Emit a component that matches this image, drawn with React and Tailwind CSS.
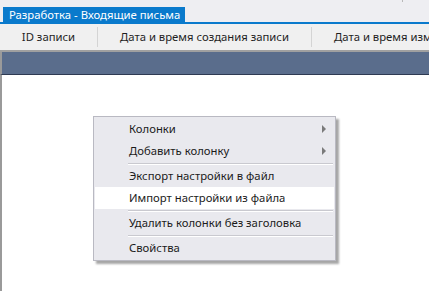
import { useState } from 'react';

const items = [
  { label: 'Колонки', sub: true },
  { label: 'Добавить колонку', sub: true, sep: true },
  { label: 'Экспорт настройки в файл' },
  { label: 'Импорт настройки из файла', active: true, sep: true },
  { label: 'Удалить колонки без заголовка', sep: true },
  { label: 'Свойства' },
];

function ContextMenu() {
  return (
    <div className="absolute left-[93px] top-[116px] w-[243px] bg-[#e9e9ee] border border-[#b9b9c2] shadow-[3px_3px_2px_rgba(0,0,0,0.35)] py-[1px]">
      {items.map((it) => (
        <div key={it.label}>
          <div className={`relative h-[22px] flex items-center pl-[34px] mx-[1px] ${it.active ? 'bg-white' : ''}`}>
            <span className="text-[11.3px] text-[#1b1b1b]">{it.label}</span>
            {it.sub && (
              <svg className="absolute right-[8px] top-[7px]" width="4" height="8" viewBox="0 0 4 8">
                <path d="M0 0 L4 4 L0 8 Z" fill="#7a7a7a" />
              </svg>
            )}
          </div>
          {it.sep && <div className="ml-[34px] mr-[2px] mt-[1px] h-[1px] bg-[#c9c9cf] border-b border-white box-content" />}
        </div>
      ))}
    </div>
  );
}

export default function App() {
  const [cols] = useState([
    { label: 'ID записи', w: 'w-[98px]' },
    { label: 'Дата и время создания записи', w: 'w-[214px]' },
  ]);
  return (
    <div className="relative w-[429px] h-[291px] overflow-hidden bg-white" style={{ fontFamily: '"Noto Sans", "Open Sans", sans-serif' }}>
      <div className="relative h-[24px] bg-[#eeeef2] border-b-2 border-[#0a7acc] flex items-end pl-[3px]">
        <div className="h-[15px] bg-[#0a7acc] text-white text-[11.3px] leading-[15px] pl-[6px] pr-[5px] whitespace-nowrap">
          Разработка - Входящие письма
        </div>
        <div className="absolute left-[402px] top-0 w-[1px] h-[2px] bg-[#b8b8b8]" />
      </div>
      <div className="h-[26px] bg-[#f0f0f0] flex items-center text-[11.3px] text-[#1e1e1e] whitespace-nowrap overflow-hidden">
        {cols.map((c) => (
          <div key={c.label} className={`${c.w} flex-none flex items-center justify-center border-r border-[#d4d4d4] h-[20px] pt-[1px]`}>
            {c.label}
          </div>
        ))}
        <div className="pl-[22px] pt-[1px]">Дата и время изменения записи</div>
      </div>
      <div className="h-[2px] bg-[#a0a0a0]" />
      <div className="h-[23px] bg-[#5a6d8c] border-l-[2px] border-[#9a9a9a] border-b border-b-[#2e3a52]" />
      <div className="h-full border-l-[2px] border-[#9a9a9a]" />
      <ContextMenu />
    </div>
  );
}
